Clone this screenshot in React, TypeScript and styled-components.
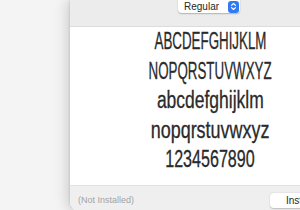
import React from "react";
import styled, { createGlobalStyle } from "styled-components";

const GlobalStyle = createGlobalStyle`
  html, body {
    margin: 0;
    padding: 0;
    width: 300px;
    height: 210px;
    overflow: hidden;
    background: #f4f4f4;
    font-family: "Liberation Sans", Arial, sans-serif;
  }
`;

const Desktop = styled.div`
  display: flex;
  width: 300px;
  height: 210px;
  padding-left: 70px;
  box-sizing: border-box;
  background: #f4f4f4;
  overflow: hidden;
`;

const Window = styled.div`
  flex: 0 0 280px;
  height: 211px;
  display: flex;
  flex-direction: column;
  background: #ffffff;
  border-bottom-left-radius: 9px;
  box-shadow: -3px 0 14px rgba(0, 0, 0, 0.16), -1px 0 2px rgba(0, 0, 0, 0.08);
  overflow: hidden;
`;

const Toolbar = styled.div`
  flex: 0 0 27px;
  min-height: 0;
  display: flex;
  justify-content: center;
  align-items: flex-start;
  box-sizing: border-box;
  background: #ececec;
  border-bottom: 1px solid #dcdcdc;
  overflow: hidden;
`;

const Popup = styled.div`
  flex: 0 0 auto;
  display: flex;
  align-items: center;
  justify-content: space-between;
  width: 62px;
  height: 16px;
  margin: -3px 2px 0 0;
  padding: 0 1px 0 6px;
  box-sizing: border-box;
  background: #ffffff;
  border-radius: 4px;
  box-shadow: 0 0.5px 1.5px rgba(0, 0, 0, 0.25);
  font-size: 10px;
  color: #262626;
`;

const PopupLabel = styled.span`
  padding-top: 3px;
`;

const Stepper = styled.span`
  display: flex;
  align-items: center;
  justify-content: center;
  width: 11px;
  height: 12px;
  margin-top: 3px;
  border-radius: 3px;
  background: #2f7bf5;
`;

const Specimen = styled.div`
  flex: 1;
  min-height: 0;
  display: flex;
  flex-direction: column;
  align-items: center;
  padding-top: 1px;
  background: #ffffff;
`;

const Line = styled.div<{ $squeeze: number }>`
  height: 29.6px;
  line-height: 27px;
  font-size: 23px;
  color: #2a2a2a;
  white-space: nowrap;
  transform: scaleX(${(p) => p.$squeeze});
  transform-origin: center;
  -webkit-text-stroke: 0.3px #2a2a2a;
`;

const Footer = styled.div`
  flex: 0 0 26px;
  min-height: 0;
  display: flex;
  align-items: center;
  justify-content: space-between;
  padding: 0 22px 0 8px;
  box-sizing: border-box;
  background: #efefef;
  border-top: 1px solid #e2e2e2;
`;

const Status = styled.span`
  font-size: 9px;
  color: #a3a3a3;
  padding-top: 3px;
`;

const Button = styled.button`
  width: 58px;
  height: 15px;
  margin-top: 3px;
  padding: 0;
  border: none;
  border-radius: 4px;
  background: #ffffff;
  box-shadow: 0 0.5px 1.5px rgba(0, 0, 0, 0.22);
  font-family: inherit;
  font-size: 10px;
  color: #262626;
`;

const lines: [string, number][] = [
  ["ABCDEFGHIJKLM", 0.58],
  ["NOPQRSTUVWXYZ", 0.58],
  ["abcdefghijklm", 0.76],
  ["nopqrstuvwxyz", 0.78],
  ["1234567890", 0.7],
];

export default function App() {
  return (
    <>
      <GlobalStyle />
      <Desktop>
        <Window>
          <Toolbar>
            <Popup>
              <PopupLabel>Regular</PopupLabel>
              <Stepper>
                <svg width="7" height="9" viewBox="0 0 7 9" fill="none">
                  <path
                    d="M1.5 3.3 3.5 1.5 5.5 3.3M1.5 5.7 3.5 7.5 5.5 5.7"
                    stroke="#fff"
                    strokeWidth="1.1"
                    strokeLinecap="round"
                    strokeLinejoin="round"
                  />
                </svg>
              </Stepper>
            </Popup>
          </Toolbar>
          <Specimen>
            {lines.map(([text, squeeze]) => (
              <Line key={text} $squeeze={squeeze}>
                {text}
              </Line>
            ))}
          </Specimen>
          <Footer>
            <Status>(Not Installed)</Status>
            <Button>Install</Button>
          </Footer>
        </Window>
      </Desktop>
    </>
  );
}
